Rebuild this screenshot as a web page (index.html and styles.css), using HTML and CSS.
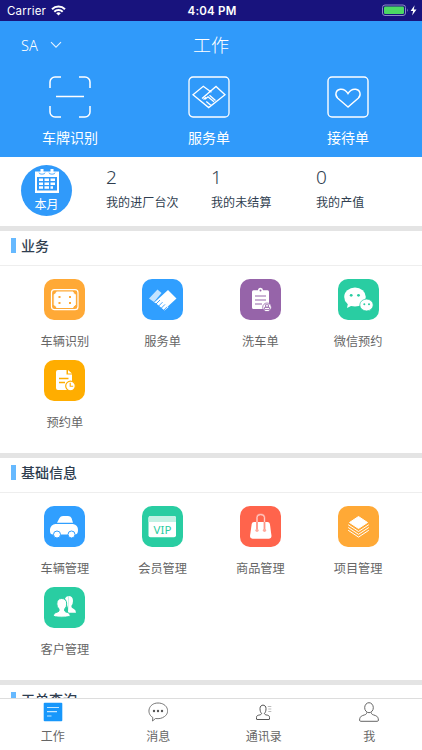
FILE: index.html
```html
<!DOCTYPE html>
<html lang="zh-CN">
  <head>
    <meta charset="UTF-8" />
    <meta name="viewport" content="width=device-width, initial-scale=1.0" />
    <title>工作</title>
    <link rel="stylesheet" href="styles.css">
  </head>
  <body>
    <div class="status">
      <div class="carrier">
        <span>Carrier</span>
        <svg width="15" height="11" viewBox="0 0 15 11" fill="none" stroke="#fff" stroke-width="2">
          <path d="M1 4.2a9.2 9.2 0 0 1 13 0M3.3 6.7a6 6 0 0 1 8.4 0" />
          <path d="M7.5 10.6L5.2 8.3a3.3 3.3 0 0 1 4.6 0z" fill="#fff" stroke="none" />
        </svg>
      </div>
      <span class="time">4:04 PM</span>
      <div class="battery">
        <svg width="35" height="13" viewBox="0 0 35 13">
          <rect x=".5" y="1" width="23" height="10.5" rx="2.5" fill="none" stroke="#8d8bc4" />
          <rect x="2" y="2.5" width="20" height="7.5" rx="1.2" fill="#4cd964" />
          <path d="M25 4.6q1.6 1.6 0 3.3z" fill="#8d8bc4" />
          <path d="M32.6 1.2l-4 5.8h2.5l-1 4.6 4.4-6.2h-2.7z" fill="#fff" />
        </svg>
      </div>
    </div>

    <header>
      <div class="navbar">
        <div class="store">
          <span>SA</span>
          <svg width="12" height="8" viewBox="0 0 12 8" fill="none" stroke="#e4f2ff" stroke-width="1.1"><path d="M1 1.2l5 5 5-5" /></svg>
        </div>
        <h1>工作</h1>
      </div>
      <div class="shortcuts">
        <div class="shortcut">
          <svg width="42" height="42" viewBox="0 0 42 42" fill="none" stroke="#fff" stroke-width="1.5">
            <path d="M1 12V6a5 5 0 0 1 5-5h6M30 1h6a5 5 0 0 1 5 5v6M41 30v6a5 5 0 0 1-5 5h-6M12 41H6a5 5 0 0 1-5-5v-6M7 20.5h28" />
          </svg>
          <span>车牌识别</span>
        </div>
        <div class="shortcut">
          <svg width="42" height="42" viewBox="0 0 42 42" fill="none" stroke="#fff" stroke-width="1.3">
            <rect x="1" y="1" width="40" height="40" rx="4" />
            <path d="M21 14.6l-5.7-4.3L5 18.8 20.7 31.6 37 18.8l-9-8.4L14 22.4M21 14.6l2.5 1.5M17 23.3l3-2.5 6 5M18.3 25.4l4.7 4M21.5 19.3l6 5.3M15.5 23.5l2.5-2.2" />
          </svg>
          <span>服务单</span>
        </div>
        <div class="shortcut">
          <svg width="42" height="42" viewBox="0 0 42 42" fill="none" stroke="#fff" stroke-width="1.4">
            <rect x="1" y="1" width="40" height="40" rx="4" />
            <path d="M21 31L10.8 22.3C7.5 19 8.6 14 13.2 13.3c3.5-.5 5.800 1 7.800 4.300 2-3.300 4.300-4.800 7.800-4.300 4.600.7 5.700 5.700 2.400 9z" />
          </svg>
          <span>接待单</span>
        </div>
      </div>
    </header>

    <section class="summary">
      <div class="month">
        <svg width="24" height="24" viewBox="0 0 24 24">
          <path d="M0 2.5h24V24H0z" fill="#fff" />
          <path d="M5.5 0h3v4h-3zM15.5 0h3v4h-3z" fill="#fff" />
          <path d="M4 3.6a3 1.6 0 0 0 6 0M14 3.6a3 1.6 0 0 0 6 0" fill="none" stroke="#309afa" stroke-width=".8" />
          <path d="M2 8h20v13.500H2z" fill="#309afa" />
          <path d="M9.500 9.500H14v2.600H9.500zM15.500 9.500H20v2.600h-4.500zM4 9.500h4v2.600H4zM4 13.500h4v2.600H4zM9.500 13.500H14v2.600H9.500zM15.500 13.500H20v2.600h-4.500zM4 17.300h4v2.500H4zM9.500 17.300H14v2.500H9.500zM15.500 17.300H18v2.500h-2.500z" fill="#fff" />
        </svg>
        <span>本月</span>
      </div>
      <div class="stat"><b>2</b><span>我的进厂台次</span></div>
      <div class="stat"><b>1</b><span>我的未结算</span></div>
      <div class="stat"><b>0</b><span>我的产值</span></div>
    </section>

    <main>
      <section class="panel">
        <h2>业务</h2>
        <div class="grid">
          <div class="item">
            <svg class="icon orange" viewBox="0 0 41 41">
              <rect x="7.500" y="10.700" width="26.500" height="20" rx="3" fill="none" stroke="#fff" stroke-width="1.200" />
              <path d="M12.500 13h16.500q0 2 2.300 2.500v10.500q-2.300.5-2.300 2.500H12.500q0-2-2.300-2.500V15.500q2.300-.5 2.300-2.500z" fill="#fff" stroke="#fff" stroke-linejoin="round" />
              <path d="M14.500 17h2v2h-2zM25 17h2v2h-2zM14.500 23h2v2h-2zM25 23h2v2h-2z" fill="#ffa936" />
            </svg>
            <span>车辆识别</span>
          </div>
          <div class="item">
            <svg class="icon blue" viewBox="0 0 41 41" fill="#fff">
              <path d="M7 19.500L15.500 10.500 19.500 14 12 23z" opacity=".72" />
              <path d="M26 11l8.500 8.500-9 8.300L17 21l-4 3.200-.7-.8z" />
              <path d="M13 23.500l4-3.300L26.500 28l-4 3.500z" />
              <path d="M14 25l4-4M16.500 27.200l4-4M19 29.400l4-4M21.500 31.500l3.500-3.700" stroke="#309afa" stroke-width=".9" />
            </svg>
            <span>服务单</span>
          </div>
          <div class="item">
            <svg class="icon purple" viewBox="0 0 41 41">
              <path d="M13.500 11.200H18a2.500 2.500 0 0 1 5 0h4.500q1.500 0 1.500 1.500V28.500q0 1.500-1.500 1.500h-14Q12 30 12 28.500V12.700q0-1.500 1.500-1.500z" fill="#fff" />
              <circle cx="20.500" cy="11.400" r="1" fill="#9664a9" />
              <path d="M15 17h11M15 21h11M15 25h7" stroke="#9664a9" />
              <circle cx="27" cy="28.300" r="4.300" fill="#fff" stroke="#9664a9" stroke-width=".8" />
              <path d="M25.500 25.700h3v2.300h-3zM24.500 28.500h5v2h-5z" fill="none" stroke="#9664a9" stroke-width=".8" />
            </svg>
            <span>洗车单</span>
          </div>
          <div class="item">
            <svg class="icon green" viewBox="0 0 41 41" fill="#fff">
              <ellipse cx="17" cy="18" rx="10.800" ry="9.500" />
              <path d="M10 24l-1 5 5-2.500zM30 29.500l2 2.500.500-4z" />
              <ellipse cx="28.500" cy="26" rx="6.700" ry="5.900" stroke="#29cda2" stroke-width=".7" />
              <g fill="#29cda2"><circle cx="13.200" cy="16.300" r="1.400" /><circle cx="20.500" cy="16.300" r="1.400" /><circle cx="26.300" cy="25.300" r="1" /><circle cx="31" cy="25.300" r="1" /></g>
            </svg>
            <span>微信预约</span>
          </div>
          <div class="item">
            <svg class="icon amber" viewBox="0 0 41 41">
              <path d="M14 10h8.500v4.500H28V30H14q-2 0-2-2V12q0-2 2-2zM24 10l4 3.500h-4z" fill="#fff" />
              <path d="M15 18.500h9.500M15 22.500h6" stroke="#ffad00" stroke-width="1.300" />
              <circle cx="26.500" cy="26" r="4.800" fill="#fff" stroke="#ffad00" stroke-width="1.200" />
              <path d="M26.200 22.800v3.500h3" fill="none" stroke="#ffad00" stroke-width="1.100" />
            </svg>
            <span>预约单</span>
          </div>
        </div>
      </section>

      <section class="panel">
        <h2>基础信息</h2>
        <div class="grid">
          <div class="item">
            <svg class="icon blue" viewBox="0 0 41 41">
              <path d="M13 16.800l2.500-4.800q1-2 3.500-2h5q2.500 0 3.500 2l1.500 4.800z" fill="#fff" />
              <path d="M11.500 18h17.500q5 1 5 6 0 4-2.500 4.500H9Q6 28.500 6 25v-2q1-4.500 5.500-5z" fill="#fff" />
              <g fill="#fff" stroke="#309fff" stroke-width="1"><circle cx="13" cy="28.500" r="3.500" /><circle cx="27.500" cy="28.500" r="3.500" /></g>
            </svg>
            <span>车辆管理</span>
          </div>
          <div class="item">
            <svg class="icon green" viewBox="0 0 41 41">
              <rect x="6.500" y="10" width="27.500" height="21.300" rx="2" fill="#fff" />
              <path d="M6.500 16v-4q0-2 2-2H32q2 0 2 2v4z" fill="#c2f1e4" />
              <text class="vip" x="20.500" y="28" text-anchor="middle">VIP</text>
            </svg>
            <span>会员管理</span>
          </div>
          <div class="item">
            <svg class="icon red" viewBox="0 0 41 41">
              <path d="M14 16h13.500q2 0 2.400 2L31.500 30q.2 2.700-2.500 2.700H12.500q-2.700 0-2.500-2.700L11.700 18q.3-2 2.300-2z" fill="#fff" />
              <path d="M17 24V11.500q0-3 3.700-3t3.800 3V24" fill="none" stroke="#ff9485" stroke-width="1.800" />
              <path d="M17 16V11.500q0-3 3.700-3t3.800 3V16" fill="none" stroke="#ffd5ce" stroke-width=".9" />
              <g fill="#ffaa9d"><circle cx="17" cy="24.300" r="1.600" /><circle cx="24.500" cy="24.300" r="1.600" /></g>
            </svg>
            <span>商品管理</span>
          </div>
          <div class="item">
            <svg class="icon orange" viewBox="0 0 41 41">
              <path d="M20.500 10.500l9 6-9 6-9-6z" fill="#fff" stroke="#fff" stroke-linejoin="round" />
              <path d="M10.200 18.700l10.300 6.800 10.300-6.800M10.200 21.500l10.300 6.800 10.300-6.800M10.200 24.300l10.300 6.800 10.300-6.800" fill="none" stroke="#fff" />
            </svg>
            <span>项目管理</span>
          </div>
          <div class="item">
            <svg class="icon green" viewBox="0 0 41 41" fill="#fff">
              <path d="M24.500 9q4.500 0 4.500 5 0 3-1.700 5 0 2.300 2.200 2.800 2.500.8 2.500 4H24z" />
              <path d="M24.500 9q-2.500 0-3.500 2.500l3 9.500z" />
              <path d="M17.700 11.500q5 0 5 5.500 0 3-2 5v2q.5 1 3 1.500 2.500.7 2.500 3 0 1.700-8.500 1.700T9.500 28.500q0-2.300 2.500-3 2.500-.6 3-1.500v-2q-2.200-2-2.200-5 0-5.500 4.900-5.500z" stroke="#29cda2" stroke-width="1" />
            </svg>
            <span>客户管理</span>
          </div>
        </div>
      </section>

      <section class="panel">
        <h2>工单查询</h2>
      </section>
    </main>

    <nav>
      <div class="tab">
        <svg width="20" height="20" viewBox="0 0 20 20"><rect x=".7" y=".7" width="18.600" height="18.600" rx="1" fill="#1797fb" /><path d="M4 5.500h12M4 9.700h10M4 14h4.500" stroke="#c4e7ff" stroke-width="1.200" /></svg>
        <span>工作</span>
      </div>
      <div class="tab">
        <svg width="20" height="20" viewBox="0 0 20 20"><path d="M7.500 16.500l-3 2.500.3-3.500C-2 11.500.5 1 10 1s12.500 9.500 6.500 13.500c-2.500 1.900-5.500 2.500-9 2z" fill="none" stroke="#666" stroke-width=".9" /><g fill="#555"><circle cx="6" cy="9" r="1.200" /><circle cx="10" cy="9" r="1.200" /><circle cx="14" cy="9" r="1.200" /></g></svg>
        <span>消息</span>
      </div>
      <div class="tab">
        <svg width="20" height="20" viewBox="0 0 20 20" fill="none" stroke="#555"><path d="M6 6.500C6 2 12 2 12 6.500c0 2.500-.6 4-1.600 5 .3 1 1 1.300 3.100 1.700 1.500.3 2 1 2 2.300v1.500q0 .5-.5.5H3q-.5 0-.5-.5v-1.500c0-1.300.5-2 2-2.300 2.100-.4 2.800-.7 3.100-1.700-1-1-1.600-2.500-1.600-5z" /><path d="M13.800 4.500h3.500M14.300 7h3M14.300 9.500h3" stroke="#aaa" stroke-width=".8" /></svg>
        <span>通讯录</span>
      </div>
      <div class="tab">
        <svg width="20" height="20" viewBox="0 0 20 20" fill="none" stroke="#666"><ellipse cx="10" cy="5.700" rx="4.300" ry="5" /><path d="M7.700 10.500c0 2-1.200 2-4 3C1.500 14.200.6 16 .6 18q0 1.300 1 1.300h16.800q1 0 1-1.300c0-2-.9-3.800-3.100-4.500-2.800-1-4-1-4-3" /></svg>
        <span>我</span>
      </div>
    </nav>
  </body>
</html>
```

FILE: styles.css
```css
:root {
  --blue: #309afa;
  --dark: #2f3e50;
  --gray: #666;
  --line: #e4e4e4;
}
* {
  margin: 0;
  padding: 0;
  box-sizing: border-box;
}
body {
  display: flex;
  flex-direction: column;
  height: 750px;
  overflow: hidden;
  background-color: #fff;
  color: var(--dark);
  font-family: "Noto Sans CJK SC", sans-serif;
}
svg {
  display: block;
  flex: none;
}

.status {
  display: flex;
  align-items: center;
  flex: none;
  height: 21px;
  padding: 0 5px 0 7px;
  background-color: #18137d;
  color: #fff;
  font-family: Inter, sans-serif;
  font-size: 11.5px;
  letter-spacing: 0.2px;
}
.carrier,
.battery {
  display: flex;
  align-items: center;
  flex: 1;
  gap: 5px;
}
.battery {
  justify-content: flex-end;
}
.time {
  font-weight: 600;
  font-size: 11.5px;
}

header {
  flex: none;
  height: 136px;
  background-color: var(--blue);
  color: #fff;
}
.navbar {
  display: grid;
  grid-template-columns: 1fr auto 1fr;
  align-items: center;
  height: 48px;
  padding: 0 21px;
}
.store {
  display: flex;
  align-items: center;
  gap: 12px;
  font-family: "Noto Sans", sans-serif;
  font-size: 14.5px;
  font-weight: 300;
}
.navbar h1 {
  padding-bottom: 2px;
  font-size: 18px;
  font-weight: 300;
}
.shortcuts {
  display: flex;
  justify-content: center;
  padding: 7px 4px 0 0;
}
.shortcut {
  display: flex;
  flex-direction: column;
  align-items: center;
  width: 139px;
  gap: 9px;
  font-size: 14px;
  line-height: 20px;
}

.summary {
  display: flex;
  flex: none;
  height: 69px;
  padding: 8px 0 0 21px;
}
.month {
  display: flex;
  flex-direction: column;
  align-items: center;
  width: 51px;
  height: 51px;
  margin-right: 34px;
  padding-top: 4px;
  border-radius: 50%;
  background-color: var(--blue);
  color: #fff;
  font-size: 12px;
  line-height: 22px;
}
.stat {
  display: flex;
  flex-direction: column;
  width: 105px;
  padding-top: 1px;
  font-size: 12px;
  letter-spacing: 0.1px;
  line-height: 18px;
}
.stat b {
  margin-bottom: 5px;
  font-family: "Noto Sans", sans-serif;
  font-size: 19px;
  font-weight: 300;
  line-height: 22px;
}

main {
  flex: 1;
  overflow: hidden;
}
.panel {
  height: 227px;
  border-top: 5px solid var(--line);
}
.panel h2 {
  display: flex;
  align-items: center;
  height: 35px;
  padding: 0 0 6px 11px;
  border-bottom: 1px solid #eee;
  font-size: 14px;
  font-weight: 500;
}
.panel h2::before {
  content: "";
  width: 5px;
  height: 15px;
  margin-right: 5px;
  background-color: #66b9ff;
}
.grid {
  display: grid;
  grid-template-columns: repeat(4, 1fr);
  padding: 13px 15px 0 16px;
}
.item {
  display: flex;
  flex-direction: column;
  align-items: center;
  height: 80.5px;
  gap: 12px;
  color: var(--gray);
  font-size: 12.2px;
  line-height: 18px;
}
.icon {
  width: 41px;
  height: 41px;
  border-radius: 10px;
}
.orange {
  background-color: #ffa936;
}
.blue {
  background-color: #309fff;
}
.purple {
  background-color: #9664a9;
}
.green {
  background-color: #29cda2;
}
.amber {
  background-color: #ffad00;
}
.red {
  background-color: #ff644c;
}
.vip {
  fill: #29cda2;
  font-family: "Noto Sans", sans-serif;
  font-size: 11.5px;
}

nav {
  display: flex;
  flex: none;
  height: 52px;
  border-top: 1px solid #ddd;
  background-color: #fff;
}
.tab {
  display: flex;
  flex-direction: column;
  align-items: center;
  flex: 1;
  gap: 5px;
  padding-top: 3px;
  color: var(--gray);
  font-size: 12px;
  line-height: 18px;
}
```
